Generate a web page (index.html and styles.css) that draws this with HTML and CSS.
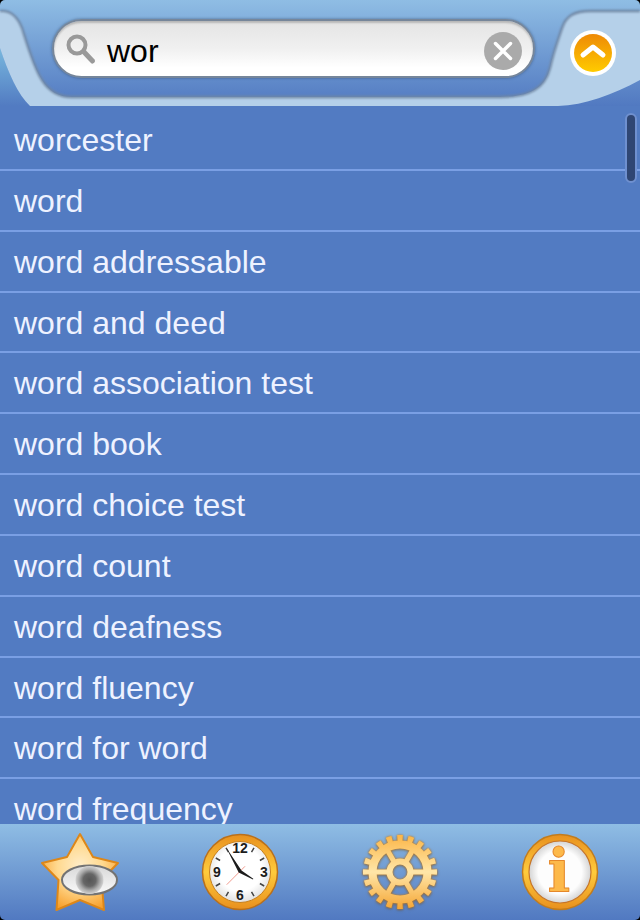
FILE: index.html
```html
<!DOCTYPE html>
<html>
<head>
  <meta charset="UTF-8">
  <title>Dictionary search</title>
  <link rel="stylesheet" href="styles.css">
</head>
<body>
  <div class="app">
    <header class="topbar">
      <svg class="topbar-bg" width="640" height="106" viewBox="0 0 640 106">
        <defs>
          <filter id="soft" x="-5%" y="-20%" width="110%" height="140%">
            <feGaussianBlur stdDeviation="0.8"/>
          </filter>
          <linearGradient id="cornerFill" x1="0" y1="0" x2="0" y2="1">
            <stop offset="0" stop-color="#78b8de"/>
            <stop offset="1" stop-color="#527bc2"/>
          </linearGradient>
        </defs>
        <path d="M0 48C8 72 18 95 30 106H0Z" fill="url(#cornerFill)"/>
        <path d="M0 11C12 10 18 18 22 28C28 47 34 68 42 80C49 91 58 97 72 97H500C530 97 545 88 550 68C554 50 558 40 562 28C566 16 574 11 590 11H640V80C612 95 585 105 558 106H30C18 95 8 72 0 48Z" fill="#b5d0e9"/>
        <path d="M0 11C12 10 18 18 22 28C28 47 34 68 42 80C49 91 58 97 72 97H500C530 97 545 88 550 68C554 50 558 40 562 28C566 16 574 11 590 11H640" fill="none" stroke="#6f86a3" stroke-width="2.4" filter="url(#soft)"/>
      </svg>

      <div class="search-field">
        <svg class="search-icon" width="32" height="34" viewBox="0 0 32 34">
          <circle cx="11" cy="13" r="8.5" fill="none" stroke="#999" stroke-width="4"/>
          <path d="M18 20L26.500 29" stroke="#999" stroke-width="5" stroke-linecap="round"/>
        </svg>
        <span class="search-text">wor</span>
        <svg class="clear-icon" width="38" height="38" viewBox="0 0 38 38">
          <circle cx="19" cy="19" r="19" fill="#aaa"/>
          <path d="M11.500 11.500L26.500 26.500M26.500 11.500L11.500 26.500" stroke="#fff" stroke-width="3.500" stroke-linecap="round"/>
        </svg>
      </div>

      <svg class="up-btn" width="46" height="46" viewBox="0 0 46 46">
        <defs>
          <linearGradient id="upFill" x1="0" y1="0" x2="0" y2="1">
            <stop offset="0" stop-color="#ee8a06"/>
            <stop offset="1" stop-color="#ffcb00"/>
          </linearGradient>
        </defs>
        <circle cx="23" cy="23" r="23" fill="#fff"/>
        <circle cx="23" cy="23" r="19" fill="url(#upFill)"/>
        <path d="M13 25L23 17L33 25" fill="none" stroke="#fff" stroke-width="5" stroke-linecap="round" stroke-linejoin="round"/>
      </svg>
    </header>

    <div class="list-wrap">
      <ul class="word-list">
        <li>worcester</li>
        <li>word</li>
        <li>word addressable</li>
        <li>word and deed</li>
        <li>word association test</li>
        <li>word book</li>
        <li>word choice test</li>
        <li>word count</li>
        <li>word deafness</li>
        <li>word fluency</li>
        <li>word for word</li>
        <li>word frequency</li>
      </ul>
      <div class="scroll-thumb"></div>
    </div>

    <footer class="tabbar">
      <a class="tab">
        <svg width="84" height="84" viewBox="0 0 84 84">
          <defs>
            <radialGradient id="starFill" cx="0.5" cy="0.42" r="0.6">
              <stop offset="0" stop-color="#ffedc8"/>
              <stop offset="0.5" stop-color="#ffd98f"/>
              <stop offset="1" stop-color="#f8a12e"/>
            </radialGradient>
            <radialGradient id="pupil">
              <stop offset="0" stop-color="#555"/>
              <stop offset="0.45" stop-color="#666"/>
              <stop offset="0.75" stop-color="#aaa"/>
              <stop offset="1" stop-color="#d2d2d2"/>
            </radialGradient>
            <linearGradient id="eyeFill" x1="0" y1="0" x2="0" y2="1">
              <stop offset="0" stop-color="#d8d8d8"/>
              <stop offset="1" stop-color="#fafafa"/>
            </linearGradient>
          </defs>
          <path d="M42 4L55 27L80 33L63.500 50L66 80L42 70L18.500 80L20.500 50L4 33L29 27Z" fill="url(#starFill)" stroke="#dd8719" stroke-width="2" stroke-linejoin="round"/>
          <ellipse cx="51.500" cy="50" rx="27.500" ry="14.500" fill="url(#eyeFill)" stroke="#737373" stroke-width="2"/>
          <circle cx="51.500" cy="50" r="14" fill="url(#pupil)"/>
        </svg>
      </a>

      <a class="tab">
        <svg width="80" height="80" viewBox="0 0 80 80">
          <defs>
            <linearGradient id="ringFill" x1="0" y1="0" x2="0" y2="1">
              <stop offset="0" stop-color="#e8901e"/>
              <stop offset="0.5" stop-color="#ffcb3c"/>
              <stop offset="1" stop-color="#e8901e"/>
            </linearGradient>
            <radialGradient id="faceFill" cx="0.5" cy="0.45" r="0.6">
              <stop offset="0.6" stop-color="#fff"/>
              <stop offset="1" stop-color="#d8d8d8"/>
            </radialGradient>
          </defs>
          <circle cx="40" cy="40" r="37.500" fill="url(#ringFill)" stroke="#b9701c" stroke-width="1.500"/>
          <circle cx="40" cy="40" r="30.500" fill="url(#faceFill)" stroke="#c77f1d"/>
          <path class="tick" d="M51.500 20.100L54 15.800M59.900 28.500L64.200 26M59.900 51.500L64.200 54M51.500 59.900L54 64.200M28.500 59.900L26 64.200M20.100 51.500L15.800 54M20.100 28.500L15.800 26M28.500 20.100L26 15.800"/>
          <text class="clock-num" x="40" y="21">12</text>
          <text class="clock-num" x="64" y="44.500">3</text>
          <text class="clock-num" x="40" y="68">6</text>
          <text class="clock-num" x="17" y="44.500">9</text>
          <path d="M26.700 52.700L45 34.300" stroke="#ef8f80" stroke-width="0.900"/>
          <path d="M26 15.300L41.500 38.500L53.300 46.700L53 47.500L38.700 40.500Z" fill="#1c1c1c"/>
        </svg>
      </a>

      <a class="tab">
        <svg class="gear" width="80" height="80" viewBox="0 0 80 80">
          <defs>
            <linearGradient id="gearFill" gradientUnits="userSpaceOnUse" x1="0" y1="3" x2="0" y2="77">
              <stop offset="0" stop-color="#fbb648"/>
              <stop offset="0.5" stop-color="#ffe6a8"/>
              <stop offset="1" stop-color="#f5a635"/>
            </linearGradient>
          </defs>
          <g fill="none" stroke="url(#gearFill)">
            <circle cx="40" cy="40" r="33.500" stroke-width="7" pathLength="200" stroke-dasharray="5 5" stroke-dashoffset="2.500"/>
            <circle cx="40" cy="40" r="27.500" stroke-width="8"/>
            <circle cx="40" cy="40" r="10.500" stroke-width="6"/>
            <path d="M12 40H30M50 40H68M26 15.800L34.500 30.500M45.500 49.500L54 64.200M54 15.800L45.500 30.500M34.500 49.500L26 64.200" stroke-width="5"/>
          </g>
        </svg>
      </a>

      <a class="tab">
        <svg width="80" height="80" viewBox="0 0 80 80">
          <defs>
            <radialGradient id="infoFace" cx="0.5" cy="0.5" r="0.5">
              <stop offset="0.7" stop-color="#fdfdfd"/>
              <stop offset="1" stop-color="#d4d4d4"/>
            </radialGradient>
          </defs>
          <circle cx="40" cy="40" r="37.500" fill="url(#ringFill)" stroke="#c17c1e" stroke-width="1.500"/>
          <circle cx="40" cy="40" r="31" fill="url(#infoFace)" stroke="#c6742a" stroke-width="1.200"/>
          <text class="info-i" x="39" y="60">i</text>
        </svg>
      </a>
    </footer>
  </div>
</body>
</html>
```

FILE: styles.css
```css
html, body {
  margin: 0;
  background: #000;
}

.app {
  width: 640px;
  height: 920px;
  display: flex;
  flex-direction: column;
  overflow: hidden;
  border-radius: 5px;
  font-family: "Liberation Sans", Arial, sans-serif;
}

.topbar {
  position: relative;
  flex: none;
  height: 106px;
  box-sizing: border-box;
  display: flex;
  align-items: flex-start;
  padding: 19px 24px 0 52px;
  background: linear-gradient(#8fbde4, #5179c1);
}

.topbar-bg {
  position: absolute;
  left: 0;
  top: 0;
}

.search-field {
  position: relative;
  flex: 1;
  height: 59px;
  box-sizing: border-box;
  display: flex;
  align-items: center;
  padding: 0 11px 0 12px;
  border: 2px solid #76869a;
  border-radius: 30px;
  background: linear-gradient(#e4e4e4, #f0f0f0 50%, #fff 85%);
  box-shadow: 0 0 3px rgba(40, 60, 90, 0.6), inset 0 2px 2px rgba(0, 0, 0, 0.2);
}

.search-icon {
  flex: none;
}

.search-text {
  flex: 1;
  margin: 6px 0 0 9px;
  font-size: 32px;
  color: #000;
}

.clear-icon {
  flex: none;
  margin-top: 4px;
}

.up-btn {
  position: relative;
  flex: none;
  margin: 11px 0 0 35px;
}

.list-wrap {
  position: relative;
  flex: 1;
  min-height: 0;
  overflow: hidden;
  background: #527bc2;
}

.word-list {
  list-style: none;
  margin: 0;
  padding: 4px 0 0;
}

.word-list li {
  height: 60.850px;
  box-sizing: border-box;
  padding-left: 14px;
  border-bottom: 2px solid #7a9fe4;
  font-size: 32px;
  line-height: 61px;
  color: #eef2ff;
}

.scroll-thumb {
  position: absolute;
  right: 3px;
  top: 7px;
  width: 8px;
  height: 66px;
  border: 2px solid #6f90cf;
  border-radius: 6px;
  background: #2f4673;
}

.tabbar {
  flex: none;
  height: 96px;
  display: grid;
  grid-template-columns: repeat(4, 160px);
  background: linear-gradient(#8fbde4, #5179c1);
}

.tab {
  display: flex;
  align-items: center;
  justify-content: center;
}

.tick {
  stroke: #444;
  stroke-width: 1.500;
  fill: none;
}

.clock-num {
  font-family: "Liberation Sans", Arial, sans-serif;
  font-size: 14px;
  font-weight: bold;
  text-anchor: middle;
  fill: #1c1c1c;
}

.gear {
  filter: drop-shadow(0 0 1px #d98a20) drop-shadow(0 1px 1px rgba(90, 60, 20, 0.5));
}

.info-i {
  font-family: "DejaVu Serif", serif;
  font-size: 60px;
  font-weight: bold;
  text-anchor: middle;
  fill: #fdb94a;
  stroke: #e5882a;
  stroke-width: 1;
  stroke-linejoin: round;
}
```
